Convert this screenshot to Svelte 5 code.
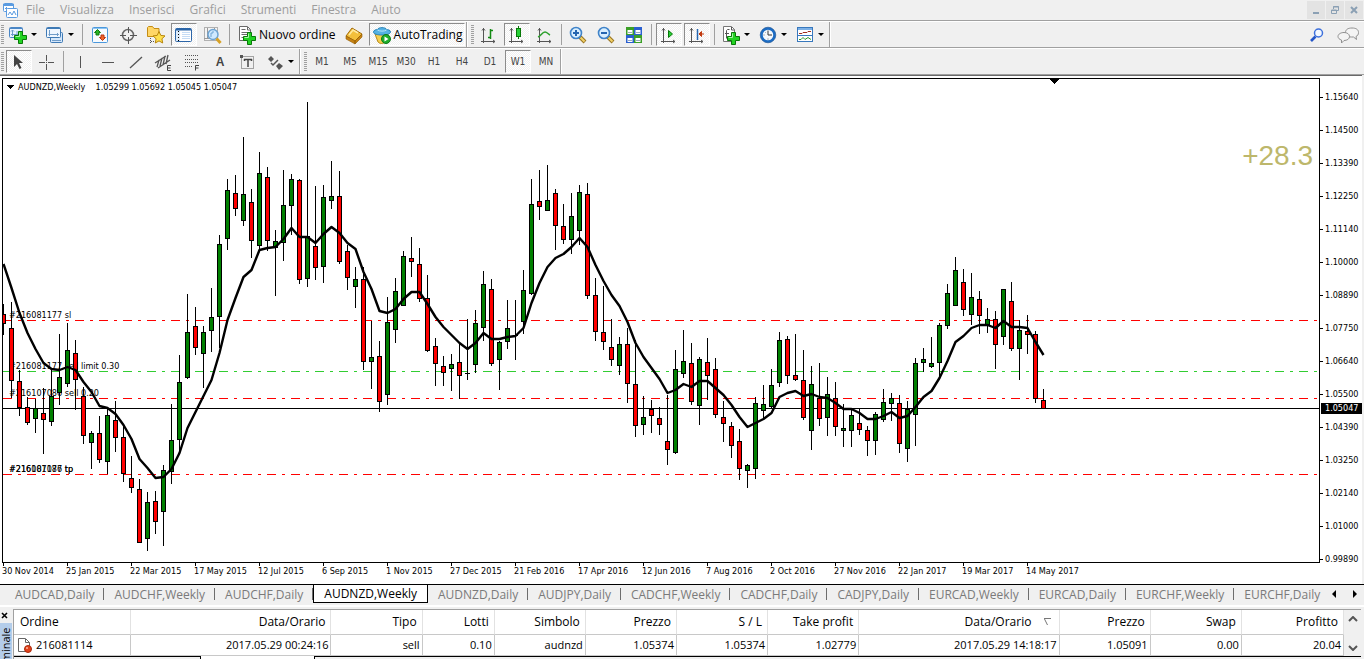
<script lang="ts">
  type Candle = [high: number, top: number, bottom: number, low: number, kind: 'u' | 'd' | 'n'];

  const menus = ['File', 'Visualizza', 'Inserisci', 'Grafici', 'Strumenti', 'Finestra', 'Aiuto'];
  const frames = ['M1', 'M5', 'M15', 'M30', 'H1', 'H4', 'D1', 'W1', 'MN'];
  const prices = [
    '1.15640', '1.14500', '1.13390', '1.12250', '1.11140', '1.10000', '1.08890', '1.07750',
    '1.06640', '1.05500', '1.04390', '1.03250', '1.02140', '1.01000', '0.99890'
  ];
  const dates = [
    '30 Nov 2014', '25 Jan 2015', '22 Mar 2015', '17 May 2015', '12 Jul 2015', '6 Sep 2015',
    '1 Nov 2015', '27 Dec 2015', '21 Feb 2016', '17 Apr 2016', '12 Jun 2016', '7 Aug 2016',
    '2 Oct 2016', '27 Nov 2016', '22 Jan 2017', '19 Mar 2017', '14 May 2017'
  ];
  const tabs = [
    'AUDCAD,Daily', 'AUDCHF,Weekly', 'AUDCHF,Daily', 'AUDNZD,Weekly', 'AUDNZD,Daily',
    'AUDJPY,Daily', 'CADCHF,Weekly', 'CADCHF,Daily', 'CADJPY,Daily', 'EURCAD,Weekly',
    'EURCAD,Daily', 'EURCHF,Weekly', 'EURCHF,Daily'
  ];
  const columns = [
    { name: 'Ordine', width: 117, value: '216081114' },
    { name: 'Data/Orario', width: 200, value: '2017.05.29 00:24:16' },
    { name: 'Tipo', width: 91, value: 'sell' },
    { name: 'Lotti', width: 72, value: '0.10' },
    { name: 'Simbolo', width: 91, value: 'audnzd' },
    { name: 'Prezzo', width: 91, value: '1.05374' },
    { name: 'S / L', width: 91, value: '1.05374' },
    { name: 'Take profit', width: 91, value: '1.02779' },
    { name: 'Data/Orario', width: 200, value: '2017.05.29 14:18:17', sorted: true },
    { name: 'Prezzo', width: 91, value: '1.05091' },
    { name: 'Swap', width: 91, value: '0.00' },
    { name: 'Profitto', width: 102, value: '20.04' }
  ];
  const totalWidth = columns.reduce((sum, c) => sum + c.width, 0);

  // order levels, y in chart units
  const levels = [
    { y: 320, text: '#216081177 sl', color: '#ff0000' },
    { y: 371, text: '#216081177 sell limit 0.30', color: '#32cd32' },
    { y: 398, text: '#216107086 sell 0.20', color: '#ff0000' },
    { y: 474, text: '#216081177 tp', color: '#ff0000' }
  ];

  // one weekly bar every 8px
  const candles: Candle[] = [
    [304, 314, 324, 335, 'd'], [302, 328, 381, 398, 'd'], [370, 381, 408, 416, 'd'], [397, 407, 423, 425, 'd'],
    [399, 408, 419, 433, 'u'], [388, 413, 420, 454, 'd'], [368, 396, 422, 426, 'u'], [334, 377, 393, 405, 'u'],
    [323, 350, 384, 387, 'u'], [340, 353, 380, 410, 'd'], [387, 396, 436, 444, 'd'], [431, 433, 443, 469, 'u'],
    [416, 433, 460, 463, 'd'], [408, 415, 462, 474, 'u'], [401, 420, 438, 452, 'd'], [426, 437, 474, 482, 'd'],
    [456, 478, 488, 493, 'd'], [479, 489, 543, 543, 'd'], [492, 502, 539, 551, 'u'], [491, 501, 522, 534, 'd'],
    [465, 470, 512, 546, 'u'], [404, 440, 472, 484, 'u'], [355, 382, 440, 451, 'u'], [294, 332, 378, 379, 'u'],
    [307, 326, 348, 355, 'd'], [326, 332, 354, 388, 'u'], [288, 317, 331, 352, 'u'], [235, 244, 317, 348, 'u'],
    [179, 190, 239, 250, 'u'], [175, 193, 209, 216, 'd'], [137, 194, 221, 226, 'u'], [189, 202, 241, 258, 'd'],
    [152, 173, 246, 250, 'u'], [167, 177, 241, 251, 'd'], [230, 241, 248, 296, 'u'], [170, 205, 243, 261, 'u'],
    [174, 179, 206, 235, 'u'], [179, 180, 280, 284, 'd'], [102, 236, 279, 287, 'u'], [186, 246, 268, 280, 'd'],
    [185, 197, 267, 283, 'u'], [161, 196, 201, 209, 'u'], [171, 196, 262, 264, 'd'], [245, 251, 278, 290, 'd'],
    [267, 279, 287, 308, 'u'], [267, 279, 362, 370, 'd'], [321, 357, 362, 389, 'u'], [341, 356, 402, 412, 'd'],
    [297, 322, 395, 405, 'u'], [278, 291, 330, 343, 'u'], [251, 256, 306, 306, 'u'], [237, 258, 262, 277, 'd'],
    [248, 264, 299, 302, 'd'], [275, 298, 351, 352, 'd'], [338, 346, 364, 386, 'd'], [356, 366, 373, 386, 'd'],
    [354, 364, 369, 391, 'u'], [342, 362, 376, 399, 'd'], [319, 373, 374, 380, 'n'], [310, 323, 365, 373, 'u'],
    [271, 284, 328, 341, 'u'], [279, 289, 364, 366, 'd'], [341, 342, 360, 390, 'u'], [300, 328, 342, 349, 'u'],
    [300, 335, 336, 360, 'n'], [270, 290, 322, 334, 'u'], [179, 204, 294, 295, 'u'], [170, 201, 207, 220, 'd'],
    [165, 200, 211, 211, 'u'], [189, 193, 226, 250, 'd'], [204, 226, 240, 244, 'd'], [193, 216, 240, 254, 'u'],
    [185, 192, 231, 245, 'u'], [183, 194, 296, 299, 'd'], [278, 295, 332, 341, 'd'], [286, 332, 342, 350, 'd'],
    [319, 347, 360, 366, 'd'], [337, 344, 366, 375, 'u'], [328, 344, 384, 403, 'd'], [340, 384, 426, 437, 'd'],
    [396, 417, 425, 435, 'u'], [400, 409, 416, 433, 'd'], [407, 418, 425, 435, 'd'], [395, 441, 450, 465, 'd'],
    [350, 369, 453, 454, 'u'], [330, 361, 374, 378, 'u'], [343, 363, 402, 405, 'd'], [357, 359, 406, 425, 'u'],
    [338, 362, 376, 400, 'd'], [358, 369, 415, 418, 'd'], [401, 417, 424, 442, 'd'], [422, 426, 446, 458, 'd'],
    [429, 441, 469, 480, 'd'], [464, 465, 471, 488, 'u'], [397, 403, 469, 479, 'u'], [385, 404, 411, 420, 'u'],
    [369, 385, 407, 408, 'u'], [332, 340, 383, 387, 'u'], [336, 339, 376, 384, 'd'], [334, 375, 380, 381, 'd'],
    [350, 380, 418, 420, 'd'], [366, 384, 431, 450, 'u'], [363, 398, 419, 426, 'd'], [377, 394, 418, 436, 'u'],
    [382, 398, 427, 436, 'd'], [404, 428, 431, 447, 'u'], [410, 415, 431, 447, 'u'], [409, 423, 430, 435, 'd'],
    [426, 430, 441, 456, 'd'], [412, 414, 441, 455, 'u'], [389, 402, 420, 422, 'u'], [393, 398, 404, 421, 'u'],
    [395, 403, 444, 453, 'd'], [401, 409, 449, 462, 'u'], [358, 363, 415, 446, 'u'], [348, 359, 363, 372, 'u'],
    [337, 363, 367, 368, 'u'], [323, 325, 363, 376, 'u'], [284, 293, 326, 329, 'u'], [257, 270, 306, 306, 'u'],
    [269, 282, 310, 316, 'd'], [273, 297, 315, 325, 'u'], [291, 299, 316, 334, 'd'], [308, 319, 325, 333, 'u'],
    [311, 319, 345, 369, 'd'], [289, 289, 337, 345, 'u'], [282, 301, 349, 351, 'd'], [320, 330, 349, 380, 'u'],
    [315, 331, 335, 354, 'd'], [331, 334, 399, 403, 'd'], [389, 400, 409, 409, 'd']
  ];

  const average = [
    264, 288, 313, 333, 349, 363, 369, 370, 367, 370, 382, 392, 406, 408, 414, 425, 439, 459, 468, 478,
    477, 469, 453, 428, 412, 396, 380, 353, 320, 298, 277, 270, 250, 248, 247, 239, 228, 237, 237, 243,
    234, 227, 233, 243, 249, 272, 289, 311, 313, 309, 299, 292, 292, 304, 317, 327, 335, 343, 349, 343,
    333, 339, 339, 337, 336, 328, 303, 283, 267, 258, 254, 247, 238, 247, 265, 281, 295, 306, 322, 343,
    357, 368, 379, 393, 390, 384, 387, 381, 381, 388, 395, 405, 417, 427, 423, 419, 413, 397, 393, 391,
    396, 394, 397, 398, 403, 409, 409, 413, 419, 419, 416, 412, 418, 416, 407, 397, 391, 378, 361, 342,
    336, 328, 325, 325, 328, 321, 327, 327, 328, 342, 355
  ];
  const averagePoints = average.map((y, i) => `${3.5 + i * 8},${y}`).join(' ');

  const fills = { u: '#008000', d: '#ff0000', n: '#000000' };

  let frame = $state('W1');
  let chart = $state('AUDNZD,Weekly');
  let autoTrading = $state(true);
</script>

{#snippet icon(name: string)}
  <svg class="icon" width="20" height="20" viewBox="0 0 20 20" fill="none" aria-hidden="true">
    {#if name === 'new-chart'}
      <rect x="1.5" y="2.5" width="13" height="10" rx="1" fill="#e8f3ff" stroke="#4a86c5" />
      <path d="M2 3.5h12" stroke="#4a86c5" />
      <path d="M4.5 5v6M3 9.500h9M3 6.500l1.500-1.500 1.500 1.500M9 6v5" stroke="#6f9cc9" />
      <path d="M10.500 6.500h4v4h4v4h-4v4h-4v-4h-4v-4h4z" fill="#22d322" stroke="#087808" />
      <path d="M11.500 7.500v4h-4" stroke="#a5f5a5" />
    {:else if name === 'profiles'}
      <rect x="5.500" y="7.500" width="12" height="10" rx="1" fill="#d4e7fb" stroke="#3f7ab5" />
      <rect x="1.500" y="2.500" width="14" height="10" rx="1" fill="#eef6ff" stroke="#3f7ab5" />
      <path d="M2 3.500h13" stroke="#3f7ab5" />
      <path d="M4.500 5v6M3.500 9.500h10M12 8l1.500 1.500-1.500 1.500M7 15.500h9" stroke="#6f9cc9" />
    {:else if name === 'market'}
      <rect x="2.500" y="2.500" width="15" height="15" rx="1" fill="#f7fbff" stroke="#4b98dc" />
      <path d="M3 3.500h14" stroke="#8cc4f2" />
      <path d="M7.500 4.500l3 3h-1.500v2.500h-3V7.500H4.500z" fill="#28b428" stroke="#0c7a0c" />
      <path d="M12.500 15.500l-3-3H11V10h3v2.500h1.500z" fill="#f4672a" stroke="#b93510" />
    {:else if name === 'data'}
      <circle cx="10" cy="10" r="5.500" stroke="#666" stroke-width="1.500" />
      <path d="M10.500 2v6M10.500 12v7M2 10.500h6M12 10.500h7" stroke="#555" />
    {:else if name === 'navigator'}
      <path d="M1.500 11.500v-9l1-1h4l1.500 2h5v8z" fill="#ffd667" stroke="#c48c14" />
      <path d="M4.500 13v5M5 16.500h4" stroke="#555" stroke-dasharray="1 1" />
      <path d="M13 6.500l1.800 3.900 4.200.5-3.100 2.900.8 4.200-3.700-2.100-3.700 2.100.8-4.200-3.100-2.900 4.200-.5z" fill="#ffe04f" stroke="#b8860b" />
    {:else if name === 'terminal'}
      <rect x="1.500" y="3.500" width="16" height="13" rx="1" fill="#fff" stroke="#2d66a8" />
      <path d="M2 4h4v12H2z" fill="#dceaf8" />
      <path d="M2 4.500h15" stroke="#2d66a8" stroke-width="2" />
      <path d="M4.500 6v10" stroke="#000" stroke-dasharray="1 2" />
      <path d="M8 7.500h8M8 9.500h8M8 11.500h8M8 13.500h8" stroke="#c5dcf5" />
    {:else if name === 'tester'}
      <rect x="2.500" y="2.500" width="13" height="13" fill="#f4f4f4" stroke="#b0b0b0" />
      <path d="M5.500 3v11M2 13.500h12M12.500 3v10" stroke="#999" />
      <circle cx="11" cy="9.500" r="5" fill="#cfe9ff" stroke="#6ea4d3" stroke-width="1.500" />
      <path d="M9 12V8h2V6" stroke="#6ea4d3" />
      <path d="M14.500 13.500l4 4.500" stroke="#d7a126" stroke-width="3" />
    {:else if name === 'order'}
      <path d="M2.500 1.500h8l3 3v11h-11z" fill="#fff" stroke="#6a6a6a" />
      <path d="M10.500 2v3h3M4.500 4.500h4M4.500 7.500h7M4.500 9.500h7M4.500 12.500h3" stroke="#6a6a6a" />
      <path d="M10.500 7.500h4v4h4v4h-4v4h-4v-4h-4v-4h4z" fill="#22d322" stroke="#087808" />
      <path d="M11.500 8.500v4h-4" stroke="#a5f5a5" />
    {:else if name === 'editor'}
      <path d="M2 11l6-8 10 6-7 7z" fill="#f3bf3b" stroke="#a26a08" />
      <path d="M2 11l9 5v3l-9-5zM11 16l7-7v3l-7 7z" fill="#c78312" stroke="#925c05" stroke-width="0.600" />
      <path d="M5 10l4-5 5 3" stroke="#ffe9a0" stroke-width="1.500" />
    {:else if name === 'auto'}
      <path d="M3 9h13l-3 8c-2 2-5 2-7 0z" fill="#f5cf4e" stroke="#b8891b" />
      <path d="M1.500 7c0-2 3-2.500 4-2.500C6 2 14 2 14.500 4.500c1 0 4 .5 4 2.500s-4 3-8.500 3-8.500-1-8.500-3z" fill="#55b2e4" stroke="#2a84b8" />
      <path d="M5.500 5c2 1.500 7 1.500 9 0" stroke="#b9e6fb" />
      <circle cx="14" cy="14" r="4.500" fill="#1fae2b" stroke="#0d7a18" />
      <path d="M12.500 11.500v5l4-2.500z" fill="#fff" />
    {:else if name === 'bars'}
      <path d="M4.500 3v15M2 16.500h14M3 5.500l1.500-2 1.500 2M14 15l2 1.500-2 1.500" stroke="#555" />
      <path d="M11.500 4v10M12 5.500h2M9 12.500h2" stroke="#138a13" stroke-width="1.500" />
    {:else if name === 'candles'}
      <path d="M4.500 3v15M2 16.500h14M3 5.500l1.500-2 1.500 2M14 15l2 1.500-2 1.500" stroke="#555" />
      <path d="M11.500 1v13" stroke="#087808" />
      <rect x="9.500" y="3.500" width="4" height="8" fill="#25cf35" stroke="#087808" />
    {:else if name === 'line'}
      <path d="M4.500 3v15M2 16.500h14M3 5.500l1.500-2 1.500 2M14 15l2 1.500-2 1.500" stroke="#555" />
      <path d="M3 12c3-1 4-5 7-5 2 0 3 2 5 3" stroke="#2ca02c" stroke-width="1.500" />
    {:else if name === 'zoom-in' || name === 'zoom-out'}
      <path d="M12 12l5 5" stroke="#9a7420" stroke-width="4" />
      <path d="M12.500 12.500l4 4" stroke="#f1d269" stroke-width="2" />
      <circle cx="8" cy="8" r="5.500" fill="#d9efff" stroke="#3f83c9" stroke-width="1.600" />
      <path d="M5 8h6" stroke="#2465b0" stroke-width="2" />
      {#if name === 'zoom-in'}
        <path d="M8 5v6" stroke="#2465b0" stroke-width="2" />
      {/if}
    {:else if name === 'tile'}
      <path d="M2 2h8v8H2zM10 10h8v8h-8z" fill="#3a9f26" />
      <path d="M10 2h8v8h-8zM2 10h8v8H2z" fill="#2a5fd0" />
      <path d="M3.500 5h5v4h-5zM11.500 5h5v4h-5zM3.500 13h5v4h-5zM11.500 13h5v4h-5z" fill="#fff" />
      <path d="M4 7.500h4M12 7.500h4M4 15.500h4M12 15.500h4" stroke="#9ab" />
    {:else if name === 'scroll'}
      <path d="M4.500 3v15M2 16.500h14M3 5.500l1.500-2 1.500 2M14 15l2 1.500-2 1.500" stroke="#555" />
      <path d="M9.500 5.500v7l4-3.500z" fill="#25cf35" stroke="#087808" />
    {:else if name === 'shift'}
      <path d="M4.500 3v15M2 16.500h14M3 5.500l1.500-2 1.500 2M14 15l2 1.500-2 1.500" stroke="#555" />
      <path d="M10.500 4v11" stroke="#2465b0" stroke-width="1.500" />
      <path d="M17 9h-4M14.500 6.500L12 9l2.500 2.500z" stroke="#c23b10" fill="#c23b10" />
    {:else if name === 'indicators'}
      <path d="M2.500 1.500h8l3 3v12h-11z" fill="#fff" stroke="#777" />
      <path d="M10.500 2v3h3M8.500 4.500H6.500l-1 1v8M4 8.500h4" stroke="#555" />
      <path d="M10.500 7.500h4v4h4v4h-4v4h-4v-4h-4v-4h4z" fill="#22d322" stroke="#087808" />
      <path d="M11.500 8.500v4h-4" stroke="#a5f5a5" />
    {:else if name === 'period'}
      <circle cx="10" cy="10" r="6.500" fill="#f4f8fc" stroke="#1c6cc4" stroke-width="2.500" />
      <circle cx="10" cy="10" r="7.800" stroke="#12498c" stroke-width="0.600" />
      <path d="M10 5.500V10h4" stroke="#333" />
      <path d="M10 13.500v1M5.500 10h1M7 7l.5.500" stroke="#777" />
    {:else if name === 'template'}
      <rect x="2.500" y="2.500" width="15" height="14" fill="#fff" stroke="#3878bd" />
      <path d="M3 4h14" stroke="#7cb0e6" stroke-width="2" />
      <path d="M3 10.500h14" stroke="#3878bd" />
      <path d="M4 8.500h3l1-1h4l1-1h3" stroke="#a03020" />
      <path d="M4 14.500h2l2-2 2 2 3-2 3 2" stroke="#2c9a2c" />
    {:else if name === 'cursor'}
      <path d="M5 3v12l3-3 2.500 5 2-1-2.500-5h4z" fill="#444" />
    {:else if name === 'cross'}
      <path d="M9.500 3v6M9.500 12v6M2 10.500h6M11 10.500h6M9 10.500h1" stroke="#555" />
    {:else if name === 'vline'}
      <path d="M10.500 4v12" stroke="#555" />
    {:else if name === 'hline'}
      <path d="M4 10.500h12" stroke="#555" />
    {:else if name === 'trend'}
      <path d="M4 16L16 5" stroke="#555" stroke-width="1.300" />
    {:else if name === 'channel'}
      <path d="M1 11l11-7M4 16l12-8M5 8l-2 7M8 6L6 14M11 4l-2 9M14 3l-2 9" stroke="#555" stroke-width="1.300" />
      <path d="M17 13.500h-3.500v5H17M13.500 16h3" stroke="#444" />
    {:else if name === 'fibo'}
      <path d="M3 3.500h14M3 7.500h14M3 10.500h14M3 14.500h8" stroke="#555" stroke-dasharray="1 1" />
      <path d="M13.500 18.500v-5H17M13.500 16h3" stroke="#444" />
    {:else if name === 'label'}
      <rect x="3.500" y="4.500" width="12" height="12" stroke="#555" stroke-dasharray="1 1" />
      <path d="M2 3h3v3H2z" fill="#555" />
      <path d="M6 7.500h8M10 7v8M6.500 7v2M13.500 7v2" stroke="#444" stroke-width="1.500" />
    {:else if name === 'arrows'}
      <path d="M3 7l3-3 3 3-3 3zM11 14l3-3 4 3-4 4z" fill="#555" />
      <path d="M6 11l2 2 5-5" stroke="#555" stroke-width="1.500" />
    {/if}
  </svg>
{/snippet}

{#snippet tool(name: string, label: string, pressed = false)}
  <button class="tool" class:pressed aria-label={label}>{@render icon(name)}</button>
{/snippet}

{#snippet dropTool(name: string, label: string)}
  <button class="tool drop" aria-label={label}>{@render icon(name)}<span class="caret"></span></button>
{/snippet}

<div class="terminal-app">
  <header class="menubar">
    <svg class="app-icon" width="16" height="16" viewBox="0 0 16 16" fill="none" aria-hidden="true">
      <rect x="1.500" y="1.500" width="10" height="8" rx="1" fill="#fff" stroke="#5a9be0" />
      <path d="M1 3h11" stroke="#5a9be0" stroke-width="2" />
      <path d="M4.500 5v3M3 6.500h2" stroke="#5a9be0" />
      <rect x="4.500" y="6.500" width="11" height="9" rx="1" fill="#fff" stroke="#5a9be0" />
      <path d="M6 13l2-3 2 3 2-4 2 4" stroke="#5a9be0" />
    </svg>
    <nav>
      {#each menus as item}
        <button class="menu">{item}</button>
      {/each}
    </nav>
    <div class="window-buttons">
      <button aria-label="Minimizza">
        <svg width="10" height="10" viewBox="0 0 10 10"><path d="M2 7h6v2H2z" fill="#8ba0b4" /></svg>
      </button>
      <button aria-label="Ripristina">
        <svg width="10" height="10" viewBox="0 0 10 10" fill="none" stroke="#8ba0b4">
          <path d="M3.500 4V1.500h5v4H7M3 2h6M1.500 5h5v3.500h-5zM1 5.500h6" />
        </svg>
      </button>
      <button aria-label="Chiudi">
        <svg width="10" height="10" viewBox="0 0 10 10"><path d="M2 2l6 6M8 2L2 8" stroke="#8ba0b4" stroke-width="2" /></svg>
      </button>
    </div>
  </header>

  <div class="bar">
    <div class="group">
      <span class="grip"></span>
      {@render dropTool('new-chart', 'Nuovo grafico')}
      {@render dropTool('profiles', 'Profili')}
      <span class="sep"></span>
      {@render tool('market', 'Market Watch')}
      {@render tool('data', 'Finestra dati')}
      {@render tool('navigator', 'Navigatore')}
      {@render tool('terminal', 'Terminale', true)}
      {@render tool('tester', 'Strategy Tester')}
      <span class="sep"></span>
      <button class="tool text">{@render icon('order')}Nuovo ordine</button>
      {@render tool('editor', 'MetaEditor')}
      <button class="tool text" class:pressed={autoTrading} onclick={() => (autoTrading = !autoTrading)}>
        {@render icon('auto')}AutoTrading
      </button>
    </div>
    <div class="group">
      <span class="grip"></span>
      {@render tool('bars', 'Grafico a barre')}
      {@render tool('candles', 'Candele', true)}
      {@render tool('line', 'Grafico a linea')}
      <span class="sep narrow"></span>
      {@render tool('zoom-in', 'Zoom in')}
      {@render tool('zoom-out', 'Zoom out')}
      {@render tool('tile', 'Affianca')}
      <span class="sep"></span>
      {@render tool('scroll', 'Scorrimento automatico', true)}
      {@render tool('shift', 'Shift del grafico', true)}
      <span class="sep"></span>
      {@render dropTool('indicators', 'Indicatori')}
      {@render dropTool('period', 'Periodi')}
      {@render dropTool('template', 'Modelli')}
    </div>
    <div class="right-tools">
      <button class="plain" aria-label="Cerca">
        <svg width="16" height="16" viewBox="0 0 16 16" fill="none">
          <path d="M6.500 9.500L2 14" stroke="#2456c8" stroke-width="2.600" />
          <circle cx="9.500" cy="6" r="4" fill="#f4f9ff" stroke="#3d70dc" stroke-width="1.500" />
        </svg>
      </button>
      <button class="plain" aria-label="Chat">
        <svg width="24" height="18" viewBox="0 0 24 18" fill="#f4f4f4" stroke="#909090">
          <path d="M16 2c4 0 6.500 1.500 6.500 4.500 0 2-1 3.300-2.500 4l.5 3-3-2.500h-2c-4 0-6-2-6-4.500C9.500 3.500 12 2 16 2z" />
          <path d="M8 6.500c3 0 5.500 1.500 5.500 4s-2.500 4-5.500 4l-2.500 2.500v-3c-2-.5-3.500-1.800-3.500-3.500 0-2.500 3-4 6-4z" />
        </svg>
      </button>
    </div>
  </div>

  <div class="bar">
    <div class="group">
      <span class="grip"></span>
      {@render tool('cursor', 'Cursore', true)}
      {@render tool('cross', 'Mirino')}
      <span class="sep narrow"></span>
      {@render tool('vline', 'Linea verticale')}
      {@render tool('hline', 'Linea orizzontale')}
      {@render tool('trend', 'Trendline')}
      {@render tool('channel', 'Canale equidistante')}
      {@render tool('fibo', 'Fibonacci')}
      <button class="tool letter">A</button>
      {@render tool('label', 'Etichetta')}
      {@render dropTool('arrows', 'Frecce')}
    </div>
    <div class="group">
      <span class="grip"></span>
      {#each frames as f}
        <button class="tool frame" class:pressed={f === frame} onclick={() => (frame = f)}>{f}</button>
      {/each}
    </div>
  </div>

  <main class="chart">
    <div class="plot-row">
      <svg class="plot" role="img" aria-label="AUDNZD,Weekly">
        <g transform="translate(-3 -79)">
          {#each levels as level}
            <text x="9" y={level.y - 2}>{level.text}</text>
          {/each}
          <text x="9" y="472">#216107086 tp</text>
        </g>
        <g transform="translate(-3 -79)" shape-rendering="crispEdges">
          {#each levels as level}
            <line x1="3" x2="110%" y1={level.y + 0.5} y2={level.y + 0.5} stroke={level.color} stroke-dasharray="9 6 3 6" />
          {/each}
          <line x1="3" x2="110%" y1="408.5" y2="408.5" stroke="#000" />
          {#each candles as [high, top, bottom, low, kind], i}
            <rect x={3 + i * 8} y={high} width="1" height={low - high} />
            <rect x={1 + i * 8} y={top} width="5" height={bottom - top} />
            {#if kind !== 'n'}
              <rect x={2 + i * 8} y={top + 1} width="3" height={bottom - top - 2} fill={fills[kind]} />
            {/if}
          {/each}
          <path d="M1049 79h11l-5.500 5z" />
          <path d="M6 85h8l-4 4z" />
        </g>
        <g transform="translate(-3 -79)">
          <polyline points={averagePoints} fill="none" stroke="#000" stroke-width="2.4" stroke-linejoin="round" />
        </g>
        <text x="15" y="11">AUDNZD,Weekly&nbsp;&nbsp;&nbsp; 1.05299 1.05692 1.05045 1.05047</text>
      </svg>
      <span class="pips">+28.3</span>
      <div class="prices">
        {#each prices as price}
          <span class="price">{price}</span>
        {/each}
        <span class="current">1.05047</span>
      </div>
    </div>
    <div class="dates">
      {#each dates as date}
        <span class="date">{date}</span>
      {/each}
    </div>
  </main>

  <div class="tabs">
    <div class="tab-list">
      {#each tabs as tab}
        <button class="tab" class:active={tab === chart} onclick={() => (chart = tab)}>{tab}</button>
      {/each}
    </div>
    <button class="arrow" aria-label="Precedente">
      <svg width="8" height="8" viewBox="0 0 8 8"><path d="M5 0v8L1 4z" /></svg>
    </button>
    <button class="arrow" aria-label="Successivo">
      <svg width="8" height="8" viewBox="0 0 8 8"><path d="M3 0v8l4-4z" /></svg>
    </button>
  </div>

  <section class="panel">
    <div class="side">
      <button class="close" aria-label="Chiudi">
        <svg width="8" height="8" viewBox="0 0 8 8"><path d="M1 1l5 5M6 1L1 6" stroke="#000" stroke-width="1.600" /></svg>
      </button>
      <span class="side-title">Terminale</span>
    </div>
    <div class="trades">
      <div class="table-wrap">
        <table>
          <colgroup>
            {#each columns as col}
              <col style:width="{(col.width / totalWidth) * 100}%" />
            {/each}
          </colgroup>
          <thead>
            <tr>
              {#each columns as col}
                <th>
                  {col.name}
                  {#if col.sorted}
                    <svg class="sort" width="8" height="8" viewBox="0 0 8 8" fill="none" stroke="#777"><path d="M0 .5h7M.5 1l3 6" /></svg>
                  {/if}
                </th>
              {/each}
            </tr>
          </thead>
          <tbody>
            <tr>
              {#each columns as col, i}
                <td>
                  {#if i === 0}
                    <svg class="doc" width="16" height="16" viewBox="0 0 16 16" fill="none" aria-hidden="true">
                      <path d="M1.500 1.500h7l4 4v9h-11z" fill="#fff" stroke="#666" />
                      <path d="M8.500 2v3.500h4" stroke="#666" />
                      <circle cx="11" cy="12" r="3.500" fill="#e2421b" stroke="#a82a0c" />
                      <circle cx="10" cy="11" r="1" fill="#ffb59c" />
                    </svg>
                  {/if}
                  {col.value}
                </td>
              {/each}
            </tr>
          </tbody>
        </table>
        <div class="scroll">
          <svg width="10" height="6" viewBox="0 0 10 6" fill="none" stroke="#555" stroke-width="2"><path d="M1 5l4-4 4 4" /></svg>
          <svg width="10" height="6" viewBox="0 0 10 6" fill="none" stroke="#555" stroke-width="2"><path d="M1 1l4 4 4-4" /></svg>
        </div>
      </div>
      <div class="footer-tabs"><span></span><span class="on"></span><span class="rest"></span></div>
    </div>
  </section>
</div>

<style>
  :global(body) {
    margin: 0;
    background: #f0f0f0;
  }
  .terminal-app {
    display: flex;
    flex-direction: column;
    height: 100vh;
    overflow: hidden;
    background: #f0f0f0;
    color: #000;
    font-family: 'Open Sans', 'Noto Sans', sans-serif;
    font-size: 12px;
    line-height: 16px;
  }
  button {
    margin: 0;
    padding: 0;
    border: 0;
    background: none;
    color: inherit;
    font: inherit;
  }
  svg {
    display: block;
    flex: none;
  }

  .menubar {
    display: flex;
    align-items: center;
    height: 20px;
    padding-left: 2px;
    border-bottom: 1px solid #a0a0a0;
  }
  nav {
    display: flex;
    flex: 1;
    gap: 15px;
    padding-left: 8px;
  }
  .menu {
    color: #9d9d9d;
  }
  .window-buttons {
    display: flex;
    gap: 1px;
    padding-right: 1px;
  }
  .window-buttons button {
    display: grid;
    place-items: center;
    width: 18px;
    height: 18px;
    background: #e3e3e3;
  }

  .bar {
    display: flex;
    height: 25px;
    border-top: 1px solid #fff;
    border-bottom: 1px solid #a0a0a0;
  }
  .group {
    display: flex;
    align-items: center;
    gap: 2px;
    padding: 0 1px;
    border-right: 1px solid #a0a0a0;
    box-shadow: 1px 0 #fff;
  }
  .group + .group {
    padding-left: 4px;
  }
  .grip {
    width: 3px;
    height: 19px;
    background: repeating-linear-gradient(#a0a0a0 0 1px, #f0f0f0 1px 2px);
  }
  .sep {
    width: 5px;
    height: 21px;
    background: linear-gradient(#a0a0a0, #a0a0a0) 2px 0 / 1px 100% no-repeat;
  }
  .sep.narrow {
    width: 3px;
    background-position-x: 1px;
  }
  .tool {
    display: flex;
    align-items: center;
    justify-content: center;
    box-sizing: border-box;
    width: 26px;
    height: 23px;
    border: 1px solid transparent;
  }
  .tool.drop {
    width: 35px;
    justify-content: flex-start;
    gap: 3px;
    padding-left: 1px;
  }
  .tool.text {
    width: auto;
    padding: 0 2px;
    gap: 2px;
  }
  .tool.pressed {
    border-color: #8c8c8c #fff #fff #8c8c8c;
    background: conic-gradient(#fff 25%, #f0f0f0 0 50%, #fff 0 75%, #f0f0f0 0) 0 0 / 2px 2px;
  }
  .caret {
    border: 3px solid transparent;
    border-top-color: #000;
    border-bottom: 0;
  }
  .letter {
    color: #444;
    font: bold 12px 'Liberation Sans', sans-serif;
  }
  .frame {
    color: #444;
    font: 10px 'DejaVu Sans Condensed', 'DejaVu Sans', sans-serif;
  }
  .right-tools {
    display: flex;
    align-items: center;
    gap: 11px;
    margin-left: auto;
    padding-right: 4px;
  }

  .chart {
    border-top: 1px solid #696969;
    margin-right: 2px;
    padding: 2px 0 0 2px;
    background: #fff;
    font: 9px/11px 'DejaVu Sans Condensed', 'DejaVu Sans', sans-serif;
  }
  .plot-row {
    position: relative;
    display: flex;
    height: 485px;
  }
  .plot {
    flex: 1;
    min-width: 0;
    height: 483px;
    border: 1px solid #000;
  }
  .pips {
    position: absolute;
    top: 62px;
    right: 49px;
    color: #bdb76b;
    font: 28px/32px 'Liberation Sans', sans-serif;
  }
  .prices {
    position: relative;
    width: 42px;
    padding-top: 3px;
  }
  .price {
    display: flex;
    align-items: center;
    gap: 2px;
    height: 33px;
  }
  .price::before {
    content: '';
    width: 3px;
    height: 1px;
    background: #000;
  }
  .current {
    position: absolute;
    top: 325px;
    left: 1px;
    right: 0;
    padding-left: 4px;
    background: #000;
    color: #fff;
  }
  .dates {
    display: flex;
    height: 21px;
  }
  .date {
    width: 64px;
    white-space: nowrap;
  }
  .date::before {
    content: '';
    display: block;
    width: 1px;
    height: 3px;
    margin-left: 1px;
    background: #000;
  }

  .tabs {
    display: flex;
    align-items: flex-start;
    height: 20px;
    border-top: 1px solid #000;
    border-bottom: 2px solid #fff;
    color: #7a7a7a;
  }
  .tab-list {
    display: flex;
    flex: 1;
    min-width: 0;
    padding-left: 5px;
    overflow: hidden;
  }
  .tab {
    height: 18px;
    padding: 1px 10px 0;
    white-space: nowrap;
    background: linear-gradient(#6d6d6d, #6d6d6d) 100% 3px / 1px 12px no-repeat;
  }
  .tab.active {
    border: solid #000;
    border-width: 0 1px 1px;
    background: #fff;
    color: #000;
  }
  .tab:last-child {
    background: none;
  }
  .arrow {
    width: 19px;
    height: 18px;
    padding-left: 5px;
  }

  .panel {
    display: flex;
    flex: 1;
    min-height: 0;
    padding-top: 2px;
    overflow: hidden;
  }
  .side {
    display: flex;
    flex-direction: column;
    width: 13px;
  }
  .close {
    height: 14px;
    padding-left: 1px;
  }
  .side-title {
    display: flex;
    flex: 1;
    justify-content: flex-end;
    min-height: 0;
    margin-right: 1px;
    padding-bottom: 4px;
    background: #b4cdea;
    font-size: 11px;
    line-height: 12px;
    white-space: nowrap;
    writing-mode: vertical-rl;
    transform: rotate(180deg);
  }
  .trades {
    flex: 1;
    min-width: 0;
    margin-right: 3px;
    border: solid #a0a0a0;
    border-width: 1px 0 0 1px;
  }
  .table-wrap {
    display: flex;
    background: #fff;
  }
  table {
    flex: 1;
    min-width: 0;
    table-layout: fixed;
    border-collapse: separate;
    border-spacing: 0;
  }
  th,
  td {
    box-sizing: border-box;
    height: 25px;
    padding: 0 5px 0 0;
    border-right: 1px solid #e2e2e2;
    border-bottom: 1px solid #c8c8c8;
    font-weight: normal;
    text-align: right;
    white-space: nowrap;
  }
  td {
    height: 21px;
    padding-right: 2px;
    border-right-color: #c8c8c8;
    font-size: 11px;
  }
  th:first-child {
    padding-left: 6px;
    text-align: left;
  }
  td:first-child {
    display: flex;
    align-items: center;
    gap: 3px;
    padding-left: 3px;
  }
  .sort {
    display: inline-block;
    margin: 0 2px 0 9px;
  }
  .scroll {
    display: flex;
    flex-direction: column;
    align-items: center;
    justify-content: space-between;
    box-sizing: border-box;
    width: 17px;
    padding: 6px 0 5px;
    background: #f0f0f0;
  }
  .footer-tabs {
    display: flex;
    height: 4px;
  }
  .footer-tabs span {
    width: 186px;
    border-top: 1px solid #000;
  }
  .footer-tabs .on {
    width: 113px;
    border: solid #000;
    border-width: 0 1px;
    background: #fff;
  }
  .footer-tabs .rest {
    flex: 1;
  }
</style>
